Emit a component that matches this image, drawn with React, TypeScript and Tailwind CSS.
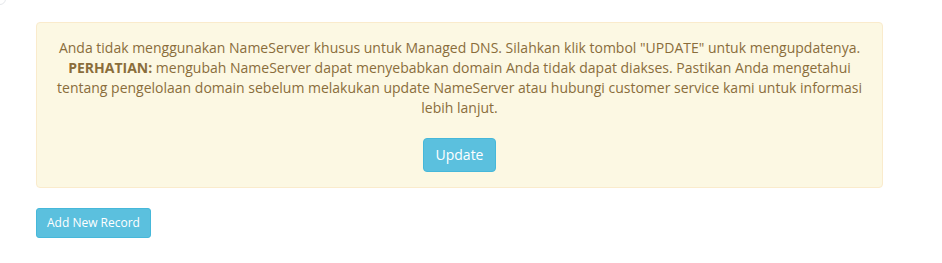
import React from 'react';

export default function App() {
  return (
    <div className="relative min-h-[263px] bg-white font-['Open_Sans',sans-serif] text-[14px] leading-[20px]">
      <div className="absolute -left-[10px] -top-[10px] h-[15px] w-[16px] rounded-br-[6px] border border-gray-200" />
      <div className="pl-[36px] pr-[59px] pt-[22px]">
        <div className="rounded-[4px] border border-[#faebcc] bg-[#fcf8e3] p-[15px] text-center text-[#8a6d3b]">
          <p>
            Anda tidak menggunakan NameServer khusus untuk Managed DNS. Silahkan klik tombol "UPDATE" untuk
            mengupdatenya. <strong className="font-bold">PERHATIAN:</strong> mengubah NameServer dapat menyebabkan
            domain Anda tidak dapat diakses. Pastikan Anda mengetahui tentang pengelolaan domain sebelum melakukan
            update NameServer atau hubungi customer service kami untuk informasi lebih lanjut.
          </p>
          <div className="mt-[20px] flex justify-center">
            <button
              type="button"
              className="rounded-[4px] border border-[#46b8da] bg-[#5bc0de] px-[12px] py-[6px] text-[14px] leading-[20px] text-white"
            >
              Update
            </button>
          </div>
        </div>
        <div className="mt-[20px]">
          <button
            type="button"
            className="rounded-[3px] border border-[#46b8da] bg-[#5bc0de] px-[10px] py-[5px] text-[12px] leading-[18px] text-white"
          >
            Add New Record
          </button>
        </div>
      </div>
    </div>
  );
}
